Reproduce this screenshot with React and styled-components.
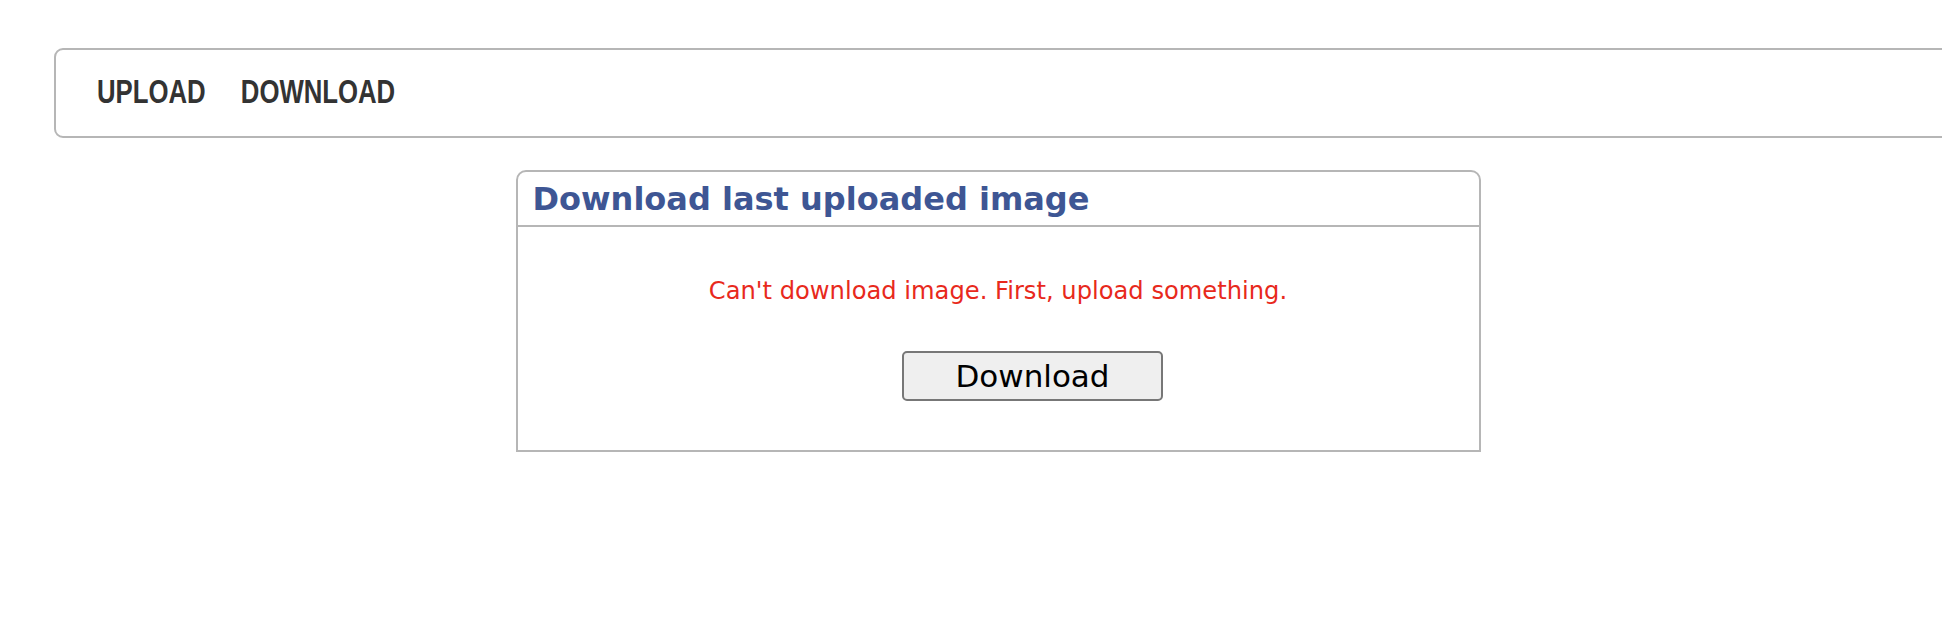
import React from "react";
import styled, { createGlobalStyle } from "styled-components";

const Global = createGlobalStyle`
  html, body { margin: 0; padding: 0; background: #fff; overflow-x: hidden; }
  body { font-family: "DejaVu Sans", Verdana, sans-serif; }
`;

const Page = styled.div`
  padding: 48px 0 0 54px;
  box-sizing: border-box;
  width: 1942px;
`;

const Nav = styled.nav`
  display: flex;
  align-items: center;
  height: 90px;
  box-sizing: border-box;
  border: 2px solid #b6b6b6;
  border-radius: 9px;
  padding: 0 0 2px 41px;
  margin-right: -30px;
`;

const NavList = styled.div`
  display: flex;
  align-items: center;
  gap: 45px;
  transform: scaleX(0.78);
  transform-origin: left center;
`;

const NavLink = styled.a`
  font-family: "Liberation Sans", Arial, sans-serif;
  font-weight: 700;
  font-size: 33px;
  color: #333;
  text-decoration: none;
`;

const Main = styled.main`
  display: flex;
  justify-content: center;
  padding-top: 32px;
`;

const Card = styled.section`
  width: 965px;
  box-sizing: border-box;
  border: 2px solid #b6b6b6;
  border-radius: 10px 10px 0 0;
`;

const CardHeader = styled.header`
  height: 55px;
  box-sizing: border-box;
  border-bottom: 2px solid #b6b6b6;
  padding: 9px 16px 0 15px;
`;

const Title = styled.h2`
  margin: 0;
  font-family: "DejaVu Sans", Verdana, sans-serif;
  font-weight: 700;
  font-size: 32px;
  color: #3e5694;
  line-height: 36px;
`;

const CardBody = styled.div`
  display: flex;
  flex-direction: column;
  align-items: center;
  padding: 50px 0 49px;
  gap: 46px;
`;

const Message = styled.p`
  margin: 0;
  font-family: "DejaVu Sans", Verdana, sans-serif;
  font-size: 24.2px;
  line-height: 28px;
  color: #e8291c;
`;

const Button = styled.button`
  width: 261px;
  height: 50px;
  margin-left: 69px;
  box-sizing: border-box;
  border: 2px solid #777;
  border-radius: 5px;
  background: #efefef;
  font-family: "DejaVu Sans", Verdana, sans-serif;
  font-size: 31px;
  color: #000;
  padding: 0;
  line-height: 1;
  cursor: pointer;
`;

export default function App() {
  return (
    <>
      <Global />
      <Page>
        <Nav>
          <NavList>
            <NavLink href="#">UPLOAD</NavLink>
            <NavLink href="#">DOWNLOAD</NavLink>
          </NavList>
        </Nav>
        <Main>
          <Card>
            <CardHeader>
              <Title>Download last uploaded image</Title>
            </CardHeader>
            <CardBody>
              <Message>Can't download image. First, upload something.</Message>
              <Button type="button">Download</Button>
            </CardBody>
          </Card>
        </Main>
      </Page>
    </>
  );
}
